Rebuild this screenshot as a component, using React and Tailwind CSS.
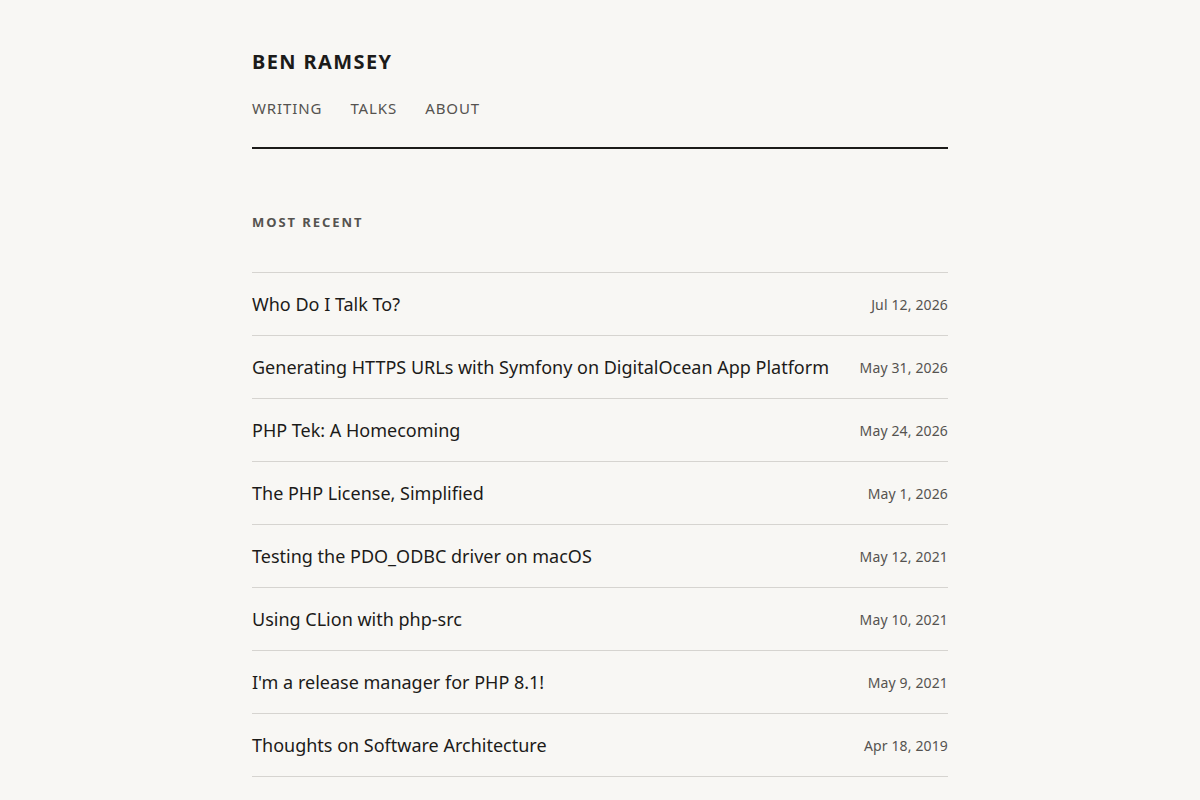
// Home page: site header, nav and the list of most recent posts
import React from 'react';

const posts = [
  { title: 'Who Do I Talk To?', date: 'Jul 12, 2026' },
  { title: 'Generating HTTPS URLs with Symfony on DigitalOcean App Platform', date: 'May 31, 2026' },
  { title: 'PHP Tek: A Homecoming', date: 'May 24, 2026' },
  { title: 'The PHP License, Simplified', date: 'May 1, 2026' },
  { title: 'Testing the PDO_ODBC driver on macOS', date: 'May 12, 2021' },
  { title: 'Using CLion with php-src', date: 'May 10, 2021' },
  { title: "I'm a release manager for PHP 8.1!", date: 'May 9, 2021' },
  { title: 'Thoughts on Software Architecture', date: 'Apr 18, 2019' },
  { title: 'Hello, World', date: 'Jan 1, 2019' },
];

const App = () => {
  return (
    <div className="min-h-screen bg-[#f8f7f4] text-[#1c1b19] font-['Noto_Sans',sans-serif]">
      <div className="w-[696px] mx-auto">
        {/* Header */}
        <header className="pt-12 pb-[27px] border-b-2 border-[#1c1b19]">
          <a href="#" className="block text-[20px] leading-[28px] font-bold tracking-[0.07em]">BEN RAMSEY</a>
          <nav className="mt-5 flex gap-[28px] text-[15px] leading-6 tracking-[0.06em] text-[#555350]">
            <a href="#">WRITING</a>
            <a href="#">TALKS</a>
            <a href="#">ABOUT</a>
          </nav>
        </header>

        {/* Most recent posts */}
        <section className="pt-[63px]">
          <h2 className="text-[13px] leading-5 font-bold tracking-[0.15em] text-[#555350]">MOST RECENT</h2>
          <ul className="mt-10 border-t border-[#d6d4d0]">
            {posts.map((post) => (
              <li key={post.title} className="h-[63px] flex items-center justify-between gap-6 border-b border-[#d6d4d0]">
                <a href="#" className="text-[18px] leading-7 text-[#1c1b19] -mt-[1px]">{post.title}</a>
                <span className="text-[14px] leading-5 tracking-[0.01em] text-[#555350] whitespace-nowrap mt-[1px]">{post.date}</span>
              </li>
            ))}
          </ul>
        </section>
      </div>
    </div>
  );
};

export default App;
